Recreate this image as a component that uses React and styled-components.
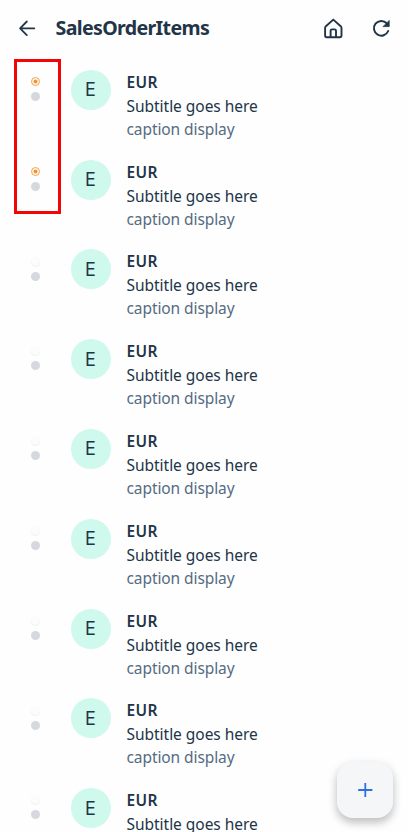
import React from "react";
import styled, { createGlobalStyle } from "styled-components";

const GlobalStyle = createGlobalStyle`
  * { box-sizing: border-box; }
  body { margin: 0; background: #fefefe; overflow: hidden; }
`;

const Screen = styled.div`
  position: relative;
  width: 408px;
  height: 832px;
  overflow: hidden;
  background: #fefefe;
  color: #223548;
  font-family: "Noto Sans", "Open Sans", sans-serif;
`;

const Header = styled.header`
  display: flex;
  align-items: center;
  height: 55.8px;
  padding: 0 15px;
`;

const IconButton = styled.button`
  display: grid;
  place-items: center;
  width: 24px;
  height: 24px;
  padding: 0;
  border: 0;
  background: none;
  color: inherit;
  svg { display: block; }
`;

const Title = styled.h1`
  flex: 1;
  margin: 0 0 0 16.6px;
  font-size: 19.6px;
  line-height: 28px;
  font-weight: 700;
  letter-spacing: -0.66px;
  white-space: nowrap;
`;

const Actions = styled.div`
  display: flex;
  gap: 24px;
`;

const List = styled.ul`
  list-style: none;
  margin: 0;
  padding: 0;
`;

const Row = styled.li`
  display: grid;
  grid-template-columns: 39px 40px 1fr;
  column-gap: 16px;
  align-items: start;
  height: 89.8px;
  padding: 14px 16px 0 15.5px;
`;

const Indicators = styled.div`
  display: flex;
  flex-direction: column;
  align-items: center;
  gap: 6px;
  padding-top: 7.2px;
`;

const StatusDot = styled.span`
  display: block;
  width: 9px;
  height: 9px;
  border-radius: 50%;
  background: ${(p) => (p.$faint ? "#fcfcfc" : "#d5d9dd")};
  box-shadow: ${(p) => (p.$faint ? "0 0.5px 0.8px #e6e6e6" : "none")};
`;

const Avatar = styled.div`
  display: grid;
  place-items: center;
  width: 40px;
  height: 40px;
  border-radius: 50%;
  background: #cef9ec;
  font-family: Inter, "Noto Sans", sans-serif;
  font-size: 18px;
  line-height: 24px;
  padding-top: 1px;
`;

const Texts = styled.div`
  display: flex;
  flex-direction: column;
  white-space: nowrap;
`;

const Name = styled.div`
  font-size: 15.5px;
  line-height: 24px;
  font-weight: 600;
  letter-spacing: 0.4px;
`;

const Subtitle = styled.div`
  font-size: 15.5px;
  line-height: 24px;
  letter-spacing: -0.03px;
`;

const Caption = styled.div`
  font-size: 15.5px;
  line-height: 22px;
  letter-spacing: -0.09px;
  color: #556b82;
`;

const Highlight = styled.div`
  position: absolute;
  left: 13.5px;
  top: 58.5px;
  width: 47px;
  height: 155px;
  border: 3px solid #f10505;
`;

const AddButton = styled.button`
  position: absolute;
  right: 15px;
  bottom: 14px;
  display: grid;
  place-items: center;
  width: 56px;
  height: 56px;
  padding: 0;
  border: 0;
  border-radius: 16px;
  background: #f5f6f7;
  color: #2f6fe0;
  box-shadow: 0 5px 8px rgba(0, 0, 0, 0.2), 0 2px 12px rgba(0, 0, 0, 0.08);
`;

const BackIcon = () => (
  <svg width="24" height="24" viewBox="0 0 24 24" fill="none" stroke="currentColor" strokeWidth="1.8" strokeLinecap="round" strokeLinejoin="round">
    <path d="M19.3 12.3H5.3M11.8 5.5L5.1 12.3L11.8 19.1" />
  </svg>
);

const HomeIcon = () => (
  <svg width="24" height="24" viewBox="0 0 24 24" fill="none" stroke="currentColor" strokeWidth="1.9" strokeLinecap="round" strokeLinejoin="round">
    <path d="M12.3 3.6L4.9 10.2Q4.1 11 4.1 12V19.6Q4.1 21.2 5.7 21.2H18.9Q20.5 21.2 20.5 19.6V12Q20.5 11 19.7 10.2Z" />
    <path d="M9.6 21V14.8Q9.6 13.4 11 13.4H13.6Q15 13.4 15 14.8V21" />
  </svg>
);

const RefreshIcon = () => (
  <svg width="24" height="24" viewBox="0 0 24 24" fill="none" stroke="currentColor" strokeWidth="2" strokeLinecap="round" strokeLinejoin="round">
    <path d="M19.2 15A7.4 7.4 0 1 1 17.7 7.2" />
    <path d="M20.2 4.8V10.6H14.4Z" fill="currentColor" strokeWidth="0.8" />
  </svg>
);

const ActiveDot = () => (
  <svg width="9" height="9" viewBox="0 0 9 9">
    <circle cx="4.5" cy="4.5" r="4" fill="#fff8ef" stroke="#f29a3d" strokeWidth="0.9" />
    <circle cx="4.5" cy="4.5" r="2" fill="#f5942f" />
  </svg>
);

const PlusIcon = () => (
  <svg width="24" height="24" viewBox="0 0 24 24" fill="none" stroke="currentColor" strokeWidth="1.8">
    <path d="M12.3 4.9V19.1M5.2 12H19.4" />
  </svg>
);

const items = Array.from({ length: 9 }, (_, i) => ({ id: i, active: i < 2 }));

export default function App() {
  return (
    <Screen>
      <GlobalStyle />
      <Header>
        <IconButton aria-label="Back"><BackIcon /></IconButton>
        <Title>SalesOrderItems</Title>
        <Actions>
          <IconButton aria-label="Home"><HomeIcon /></IconButton>
          <IconButton aria-label="Refresh"><RefreshIcon /></IconButton>
        </Actions>
      </Header>
      <List>
        {items.map((item) => (
          <Row key={item.id}>
            <Indicators>
              {item.active ? <ActiveDot /> : <StatusDot $faint />}
              <StatusDot />
            </Indicators>
            <Avatar>E</Avatar>
            <Texts>
              <Name>EUR</Name>
              <Subtitle>Subtitle goes here</Subtitle>
              <Caption>caption display</Caption>
            </Texts>
          </Row>
        ))}
      </List>
      <Highlight />
      <AddButton aria-label="Add"><PlusIcon /></AddButton>
    </Screen>
  );
}
